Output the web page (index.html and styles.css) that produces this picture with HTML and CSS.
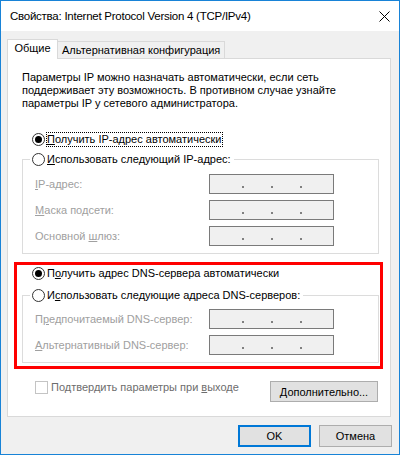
FILE: index.html
```html
<!DOCTYPE html>
<html lang="ru">
<head>
<meta charset="utf-8">
<link rel="stylesheet" href="styles.css">
</head>
<body>
<div class="window">
  <div class="titlebar">
    <span class="title">Свойства: Internet Protocol Version 4 (TCP/IPv4)</span>
    <svg class="close" width="11" height="11" viewBox="0 0 11 11"><path d="M0.5 0.5 L10.5 10.5 M10.5 0.5 L0.5 10.5" stroke="#000" stroke-width="1" fill="none"/></svg>
  </div>
  <div class="body">
    <div class="tabs">
      <div class="tab active">Общие</div>
      <div class="tab">Альтернативная конфигурация</div>
    </div>
    <div class="panel">
      <p class="intro">Параметры IP можно назначать автоматически, если сеть<br>поддерживает эту возможность. В противном случае узнайте<br>параметры IP у сетевого администратора.</p>

      <div class="radio-row first">
        <span class="radio checked"></span>
        <span class="focus"><u>П</u>олучить IP-адрес автоматически</span>
      </div>
      <div class="group">
        <div class="legend"><span class="radio"></span><span class="rtext"><u>И</u>спользовать следующий IP-адрес:</span></div>
        <div class="fields">
          <span class="label"><u>I</u>P-адрес:</span><div class="ipbox"><i></i><i></i><i></i></div>
          <span class="label"><u>М</u>аска подсети:</span><div class="ipbox"><i></i><i></i><i></i></div>
          <span class="label">Основной <u>ш</u>люз:</span><div class="ipbox"><i></i><i></i><i></i></div>
        </div>
      </div>

      <div class="radio-row dns">
        <span class="radio checked"></span>
        <span class="rtext">П<u>о</u>лучить адрес DNS-сервера автоматически</span>
      </div>
      <div class="group group-dns">
        <div class="legend"><span class="radio"></span><span class="rtext">И<u>с</u>пользовать следующие адреса DNS-серверов:</span></div>
        <div class="fields">
          <span class="label">П<u>р</u>едпочитаемый DNS-сервер:</span><div class="ipbox"><i></i><i></i><i></i></div>
          <span class="label"><u>А</u>льтернативный DNS-сервер:</span><div class="ipbox"><i></i><i></i><i></i></div>
        </div>
      </div>

      <div class="footer-row">
        <div class="check-row"><span class="checkbox"></span><span class="ctext">Подтвердить параметры при <u>в</u>ыходе</span></div>
        <button class="btn advanced"><u>Д</u>ополнительно...</button>
      </div>
    </div>
    <div class="actions">
      <button class="btn default">OK</button>
      <button class="btn">Отмена</button>
    </div>
  </div>
  <div class="highlight"></div>
</div>
</body>
</html>
```

FILE: styles.css
```css
html, body {
  margin: 0;
  padding: 0;
  background: #fff;
}

.window {
  position: relative;
  width: 400px;
  height: 455px;
  box-sizing: border-box;
  border: 1px solid #1883d7;
  background: #f0f0f0;
  display: flex;
  flex-direction: column;
  font-family: "Liberation Sans", Arial, sans-serif;
  font-size: 11px;
  color: #000;
}

.titlebar {
  height: 30px;
  flex: none;
  background: #fff;
  display: flex;
  align-items: center;
  justify-content: space-between;
  padding: 0 9px;
}

.title {
  line-height: 16px;
  font-size: 11.5px;
  letter-spacing: -0.25px;
}

.close {
  display: block;
}

.body {
  flex: 1;
  display: flex;
  flex-direction: column;
  padding: 8px 7px 0 6px;
}

.tabs {
  display: flex;
  align-items: flex-end;
  height: 20px;
  margin-bottom: -1px;
  position: relative;
  z-index: 1;
}

.tab {
  box-sizing: border-box;
  height: 17px;
  margin-bottom: 1px;
  border: 1px solid #d9d9d9;
  border-left: none;
  border-bottom: none;
  background: #f0f0f0;
  padding: 0 4px;
  line-height: 17px;
  white-space: nowrap;
}

.tab.active {
  width: 51px;
  height: 20px;
  margin-bottom: 0;
  border-left: 1px solid #d9d9d9;
  background: #fff;
  padding: 0;
  text-align: center;
  line-height: 17px;
}

.panel {
  width: 384px;
  height: 359px;
  box-sizing: border-box;
  border: 1px solid #d9d9d9;
  background: #fff;
  padding-top: 12px;
}

.intro {
  margin: 0 0 0 14px;
  line-height: 13px;
  white-space: nowrap;
}

u {
  text-decoration: underline;
  text-underline-offset: 1px;
}

.radio-row {
  display: flex;
  align-items: center;
  height: 16px;
  margin-left: 24px;
  white-space: nowrap;
}

.radio-row.first {
  margin-top: 21px;
}

.radio-row.dns {
  margin-top: 11px;
}

.radio {
  box-sizing: border-box;
  width: 13px;
  height: 13px;
  flex: none;
  border: 1px solid #333;
  border-radius: 50%;
  background: #fff;
  display: flex;
  align-items: center;
  justify-content: center;
}

.radio.checked::after {
  content: "";
  width: 7px;
  height: 7px;
  border-radius: 50%;
  background: #000;
}

.focus {
  margin-left: 1px;
  border: 1px dotted #000;
  padding: 0 1px 0 0;
  line-height: 13px;
}

.rtext {
  margin-left: 2px;
  line-height: 16px;
}

.group {
  box-sizing: border-box;
  width: 357px;
  margin: 12px 0 0 14px;
  border: 1px solid #dcdcdc;
  padding: 0 0 7px 12px;
}

.group-dns {
  margin-top: 14px;
}

.legend {
  display: flex;
  align-items: center;
  width: fit-content;
  height: 16px;
  margin: -9px 0 7px -5px;
  padding: 0 3px 0 2px;
  background: #fff;
  white-space: nowrap;
}

.group-dns .legend {
  margin-bottom: 6px;
}

.fields {
  display: grid;
  grid-template-columns: 174px 125px;
  grid-auto-rows: 20px;
  row-gap: 6px;
}

.label {
  color: #a0a0a0;
  line-height: 20px;
  white-space: nowrap;
}

.ipbox {
  box-sizing: border-box;
  border: 1px solid #7a7a7a;
  background: #f0f0f0;
  display: flex;
  align-items: flex-end;
  padding: 0 0 5px 32px;
}

.ipbox i {
  width: 2px;
  height: 2px;
  background: #808080;
  margin-right: 27px;
}

.footer-row {
  display: flex;
  justify-content: space-between;
  align-items: flex-start;
  margin-top: 18px;
}

.check-row {
  display: flex;
  align-items: center;
  height: 13px;
  margin-left: 27px;
  white-space: nowrap;
}

.checkbox {
  box-sizing: border-box;
  width: 13px;
  height: 13px;
  border: 1px solid #c4c4c4;
  background: #fff;
}

.ctext {
  margin-left: 3px;
  color: #6d6d6d;
  line-height: 13px;
}

.btn {
  box-sizing: border-box;
  font-family: inherit;
  font-size: 11px;
  color: #000;
  background: #e1e1e1;
  border: 1px solid #adadad;
  padding: 0;
  margin: 0;
  height: 22px;
  width: 73px;
  text-align: center;
  line-height: 18px;
}

.btn.advanced {
  width: 108px;
  height: 21px;
  margin-right: 12px;
}

.btn.default {
  border: 2px solid #0078d7;
}

.actions {
  display: flex;
  justify-content: flex-end;
  gap: 8px;
  margin-top: 8px;
}

.highlight {
  position: absolute;
  left: 13px;
  top: 261px;
  width: 369px;
  height: 107px;
  box-sizing: border-box;
  border: 3px solid #f00;
}
```
